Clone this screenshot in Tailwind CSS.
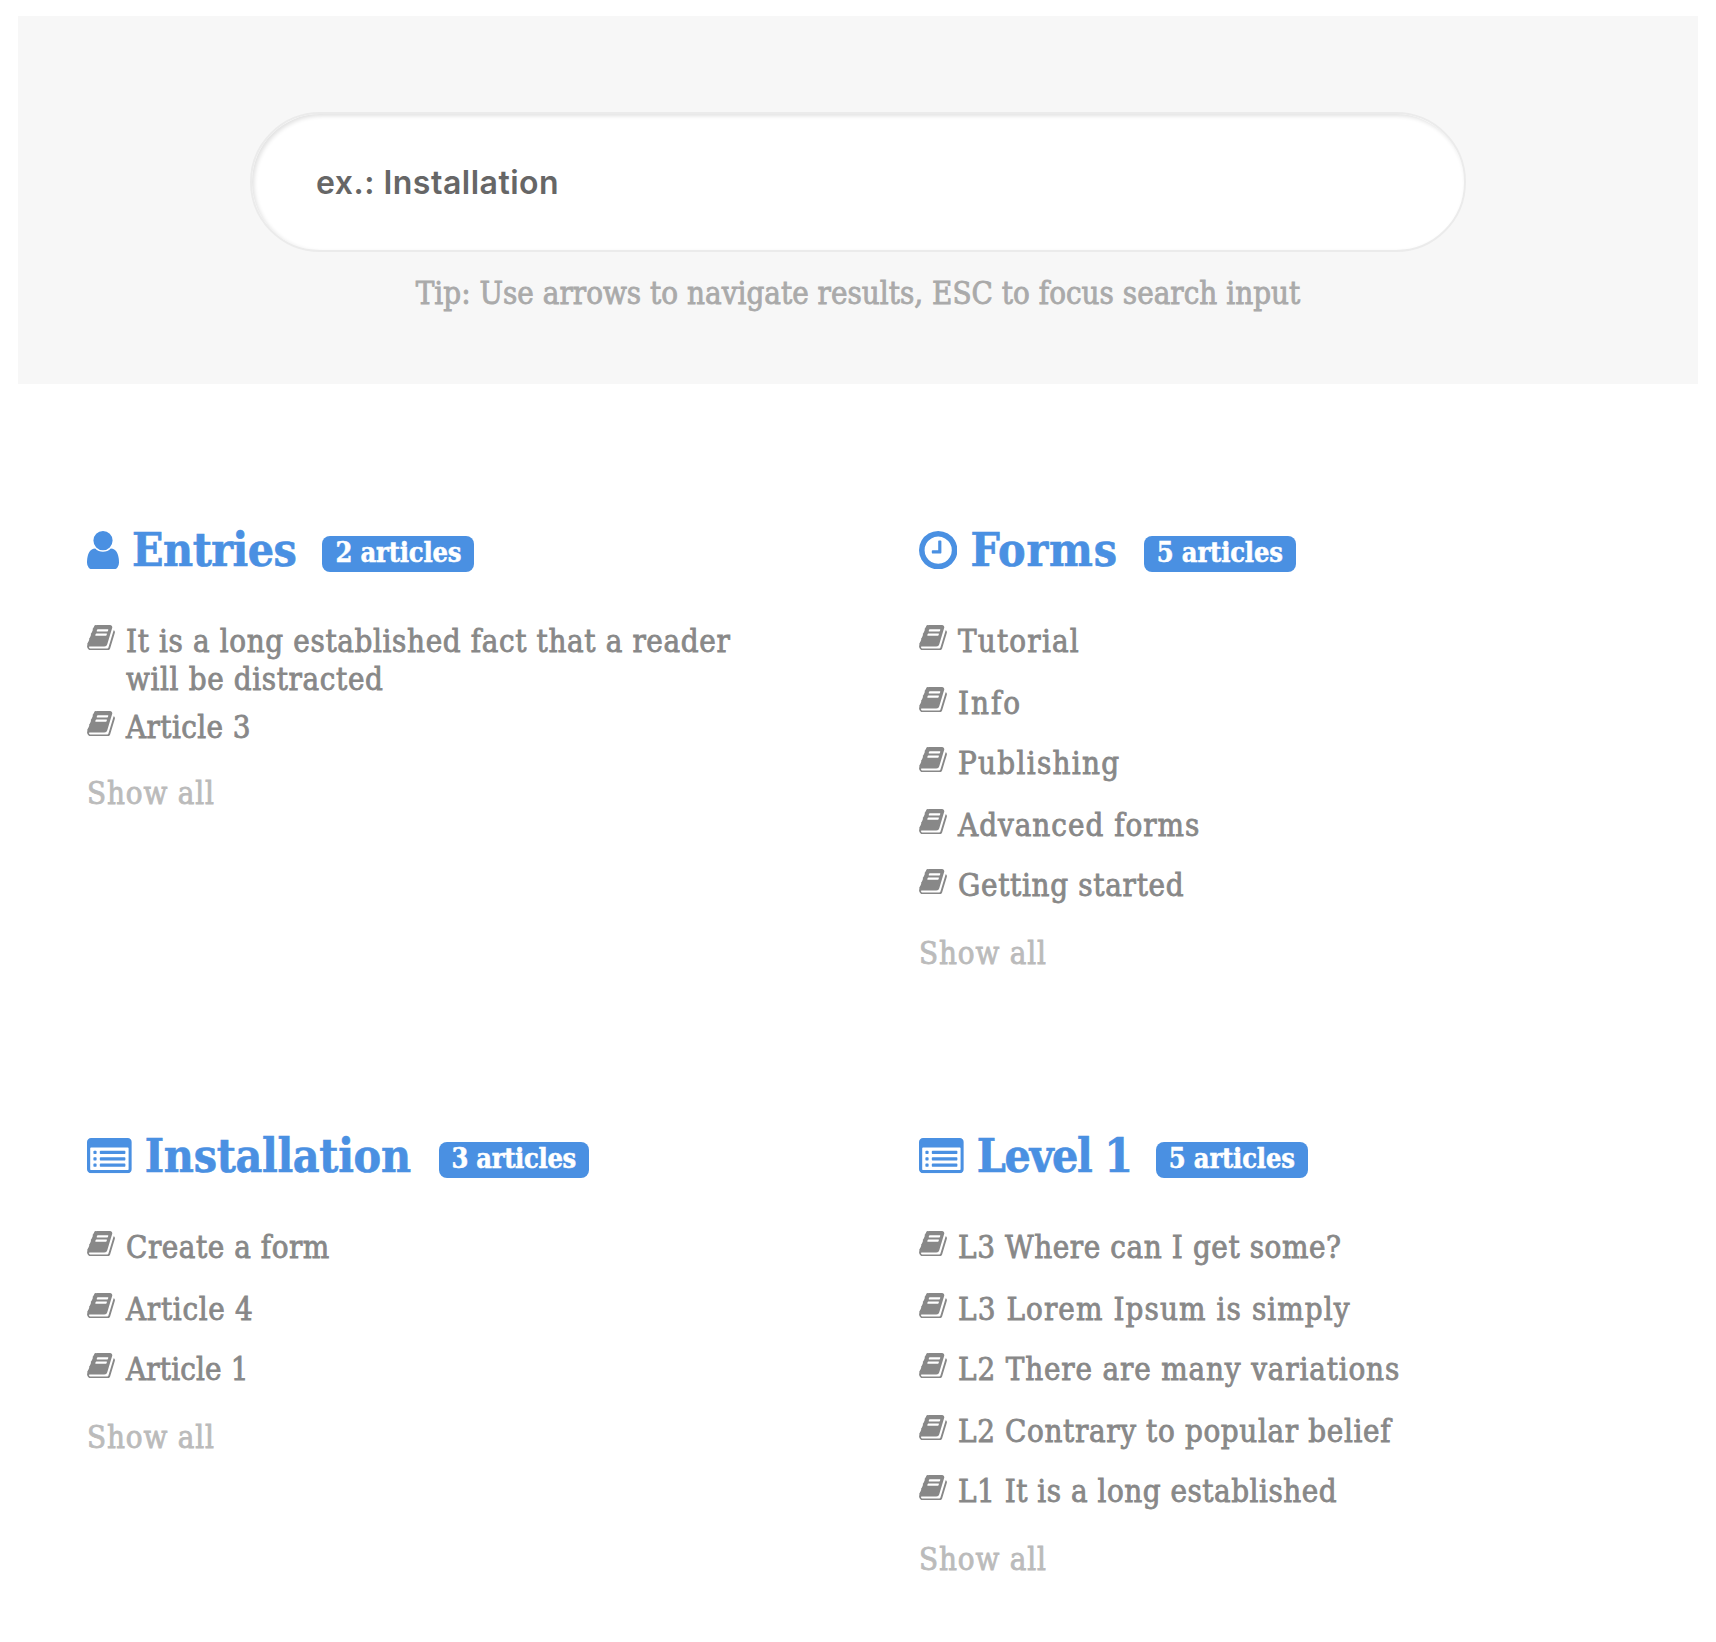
<!DOCTYPE html>
<html lang="en">
<head>
<meta charset="utf-8">
<title>Knowledge base</title>
<script src="https://cdn.jsdelivr.net/npm/@tailwindcss/browser@4"></script>
</head>
<body class="h-[1642px] overflow-hidden bg-white font-['DejaVu_Serif_Condensed','DejaVu_Serif',serif] text-[31px] leading-[38px] text-[#888]">
<svg class="hidden">
  <symbol id="book" viewBox="64 128 1664 1536"><path d="M1703 478q40 57 18 129l-275 906q-19 64-76.500 107.500t-122.500 43.500h-923q-77 0-148.500-53.500t-99.500-131.500q-24-67-2-127 0-4 3-27t4-37q1-8-3-21.500t-3-19.500q2-11 8-21t16.500-23.500 16.500-23.500q23-38 45-91.500t30-91.500q3-10 .5-30t-.5-28q3-11 17-28t17-23q21-36 42-92t25-90q1-9-2.500-32t.5-28q4-13 22-30.500t22-22.500q19-26 42.500-84.500t27.500-96.500q1-8-3-25.500t-2-26.500q2-8 9-18t18-23 17-21q8-12 16.500-30.500t15-35 16-36 19.500-32 26.500-23.500 36-11.500 47.500 5.500l-1 3q38-9 51-9h761q74 0 114 56t18 130l-274 906q-36 119-71.500 153.500t-128.500 34.500h-869q-27 0-38 15-11 16-1 43 24 70 144 70h923q29 0 56-15.500t35-41.500l300-987q7-22 5-57 38 15 59 43zm-1064 2q-4 13 2 22.500t20 9.500h608q13 0 25.500-9.500t16.500-22.500l21-64q4-13-2-22.500t-20-9.500h-608q-13 0-25.500 9.500t-16.500 22.500zm-83 256q-4 13 2 22.500t20 9.500h608q13 0 25.500-9.500t16.500-22.500l21-64q4-13-2-22.500t-20-9.500h-608q-13 0-25.500 9.500t-16.500 22.500z"/></symbol>
  <symbol id="user" viewBox="256 128 1280 1536"><path d="M1536 1399q0 109-62.500 187t-150.500 78h-854q-88 0-150.500-78t-62.500-187q0-85 8.500-160.500t31.500-152 58.500-131 94-89 134.500-34.500q131 128 313 128t313-128q76 0 134.500 34.500t94 89 58.500 131 31.500 152 8.500 160.500zm-256-887q0 159-112.500 271.500t-271.500 112.500-271.500-112.500-112.500-271.500 112.500-271.500 271.500-112.500 271.500 112.500 112.500 271.500z"/></symbol>
  <symbol id="clock" viewBox="128 128 1536 1536"><path d="M1024 544v448q0 14-9 23t-23 9h-320q-14 0-23-9t-9-23v-64q0-14 9-23t23-9h224v-352q0-14 9-23t23-9h64q14 0 23 9t9 23zm416 352q0-148-73-273t-198-198-273-73-273 73-198 198-73 273 73 273 198 198 273 73 273-73 198-198 73-273zm224 0q0 209-103 385.500t-279.500 279.500-385.500 103-385.500-103-279.500-279.500-103-385.500 103-385.500 279.500-279.500 385.500-103 385.500 103 279.500 279.500 103 385.500z"/></symbol>
  <symbol id="list" viewBox="0 128 1792 1408"><path d="M384 1184v64q0 13-9.500 22.500t-22.500 9.500h-64q-13 0-22.500-9.500t-9.500-22.500v-64q0-13 9.500-22.500t22.500-9.500h64q13 0 22.500 9.500t9.500 22.500zm0-256v64q0 13-9.500 22.500t-22.500 9.500h-64q-13 0-22.500-9.500t-9.500-22.500v-64q0-13 9.500-22.500t22.500-9.500h64q13 0 22.500 9.500t9.500 22.500zm0-256v64q0 13-9.500 22.500t-22.500 9.500h-64q-13 0-22.500-9.500t-9.500-22.500v-64q0-13 9.500-22.500t22.500-9.500h64q13 0 22.500 9.500t9.500 22.500zm1152 512v64q0 13-9.500 22.500t-22.500 9.500h-960q-13 0-22.500-9.500t-9.500-22.500v-64q0-13 9.500-22.500t22.500-9.500h960q13 0 22.500 9.500t9.500 22.500zm0-256v64q0 13-9.500 22.500t-22.500 9.500h-960q-13 0-22.500-9.500t-9.500-22.500v-64q0-13 9.500-22.500t22.500-9.500h960q13 0 22.500 9.500t9.500 22.500zm0-256v64q0 13-9.500 22.500t-22.500 9.500h-960q-13 0-22.500-9.500t-9.500-22.500v-64q0-13 9.500-22.500t22.500-9.500h960q13 0 22.500 9.500t9.500 22.500zm128 704v-832q0-13-9.500-22.500t-22.500-9.500h-1472q-13 0-22.500 9.500t-9.500 22.500v832q0 13 9.500 22.500t22.500 9.500h1472q13 0 22.500-9.500t9.500-22.500zm128-1088v1088q0 66-47 113t-113 47h-1472q-66 0-113-47t-47-113v-1088q0-66 47-113t113-47h1472q66 0 113 47t47 113z"/></symbol>
</svg>

<header class="mx-[18px] mt-4 flex h-[368px] flex-col items-center bg-[#f7f7f7] pt-24">
  <input type="text" placeholder="ex.: Installation" class="h-[140px] w-[1216px] rounded-[70px] border-2 border-[#ebebeb] bg-white px-16 font-[Inter,sans-serif] text-[32px] font-semibold tracking-[0.5px] text-[#666] shadow-[inset_2px_2px_4px_rgba(0,0,0,0.12)] placeholder:text-[#666]">
  <p class="mt-[22px] tracking-[0.03px] whitespace-nowrap text-[#aaa] [-webkit-text-stroke:0.8px_#aaa]">Tip: Use arrows to navigate results, ESC to focus search input</p>
</header>

<main class="mt-[136px] grid grid-cols-[832px_700px] grid-rows-[606px_500px] pl-[87px]">
  <section>
    <h2 class="flex h-[60px] items-center text-[46px] leading-[60px] font-bold text-[#4a90e2]">
      <svg class="mr-[13px] h-[38.400px] w-8 fill-current"><use href="#user"/></svg>
      <span class="tracking-[-0.5px] [-webkit-text-stroke:0.6px_#4a90e2]">Entries</span>
      <span class="mt-2 ml-[26px] h-9 w-[152px] rounded-lg bg-[#4a90e2] text-center text-[27px] leading-[34px] tracking-[-0.15px] text-white [-webkit-text-stroke:0.5px_#fff]">2 articles</span>
    </h2>
    <ul class="mt-[42px] [-webkit-text-stroke:0.8px_#888]">
      <li class="mb-2.5 flex w-[660px] gap-[11px]"><svg class="mt-[2.500px] h-[25.700px] w-7 shrink-0 fill-current stroke-none"><use href="#book"/></svg><a class="tracking-[0.64px]">It is a long established fact that a reader<br>will be distracted</a></li>
      <li class="flex gap-[11px]"><svg class="mt-[2.500px] h-[25.700px] w-7 shrink-0 fill-current"><use href="#book"/></svg><a class="tracking-[0.4px]">Article 3</a></li>
    </ul>
    <a class="mt-7 block tracking-[0.85px] text-[#bbb] [-webkit-text-stroke:0.8px_#bbb]">Show all</a>
  </section>

  <section>
    <h2 class="flex h-[60px] items-center text-[46px] leading-[60px] font-bold text-[#4a90e2]">
      <svg class="mr-[13px] size-[38.400px] fill-current"><use href="#clock"/></svg>
      <span class="tracking-[0.8px] [-webkit-text-stroke:0.6px_#4a90e2]">Forms</span>
      <span class="mt-2 ml-[26px] h-9 w-[152px] rounded-lg bg-[#4a90e2] text-center text-[27px] leading-[34px] tracking-[-0.15px] text-white [-webkit-text-stroke:0.5px_#fff]">5 articles</span>
    </h2>
    <ul class="mt-[42px] [-webkit-text-stroke:0.8px_#888]">
      <li class="mb-6 flex gap-[11px]"><svg class="mt-[2.500px] h-[25.700px] w-7 shrink-0 fill-current"><use href="#book"/></svg><a class="tracking-[1.2px]">Tutorial</a></li>
      <li class="mb-[22px] flex gap-[11px]"><svg class="mt-[2.500px] h-[25.700px] w-7 shrink-0 fill-current"><use href="#book"/></svg><a class="tracking-[2px]">Info</a></li>
      <li class="mb-6 flex gap-[11px]"><svg class="mt-[2.500px] h-[25.700px] w-7 shrink-0 fill-current"><use href="#book"/></svg><a class="tracking-[1.3px]">Publishing</a></li>
      <li class="mb-[22px] flex gap-[11px]"><svg class="mt-[2.500px] h-[25.700px] w-7 shrink-0 fill-current"><use href="#book"/></svg><a class="tracking-[1.0px]">Advanced forms</a></li>
      <li class="flex gap-[11px]"><svg class="mt-[2.500px] h-[25.700px] w-7 shrink-0 fill-current"><use href="#book"/></svg><a class="tracking-[0.7px]">Getting started</a></li>
    </ul>
    <a class="mt-[30px] block tracking-[0.85px] text-[#bbb] [-webkit-text-stroke:0.8px_#bbb]">Show all</a>
  </section>

  <section>
    <h2 class="flex h-[60px] items-center text-[46px] leading-[60px] font-bold text-[#4a90e2]">
      <svg class="mr-[13px] h-[35.200px] w-[44.800px] fill-current"><use href="#list"/></svg>
      <span class="tracking-[-0.3px] [-webkit-text-stroke:0.6px_#4a90e2]">Installation</span>
      <span class="mt-2 ml-7 h-9 w-[150px] rounded-lg bg-[#4a90e2] text-center text-[27px] leading-[34px] tracking-[-0.3px] text-white [-webkit-text-stroke:0.5px_#fff]">3 articles</span>
    </h2>
    <ul class="mt-[42px] [-webkit-text-stroke:0.8px_#888]">
      <li class="mb-6 flex gap-[11px]"><svg class="mt-[2.500px] h-[25.700px] w-7 shrink-0 fill-current"><use href="#book"/></svg><a class="tracking-[0.55px]">Create a form</a></li>
      <li class="mb-[22px] flex gap-[11px]"><svg class="mt-[2.500px] h-[25.700px] w-7 shrink-0 fill-current"><use href="#book"/></svg><a class="tracking-[0.7px]">Article 4</a></li>
      <li class="flex gap-[11px]"><svg class="mt-[2.500px] h-[25.700px] w-7 shrink-0 fill-current"><use href="#book"/></svg><a class="tracking-[0.15px]">Article 1</a></li>
    </ul>
    <a class="mt-[30px] block tracking-[0.85px] text-[#bbb] [-webkit-text-stroke:0.8px_#bbb]">Show all</a>
  </section>

  <section>
    <h2 class="flex h-[60px] items-center text-[46px] leading-[60px] font-bold text-[#4a90e2]">
      <svg class="mr-[13px] h-[35.200px] w-[44.800px] fill-current"><use href="#list"/></svg>
      <span class="tracking-[-1.4px] [-webkit-text-stroke:0.6px_#4a90e2]">Level 1</span>
      <span class="mt-2 ml-6 h-9 w-[152px] rounded-lg bg-[#4a90e2] text-center text-[27px] leading-[34px] tracking-[-0.15px] text-white [-webkit-text-stroke:0.5px_#fff]">5 articles</span>
    </h2>
    <ul class="mt-[42px] [-webkit-text-stroke:0.8px_#888]">
      <li class="mb-6 flex gap-[11px]"><svg class="mt-[2.500px] h-[25.700px] w-7 shrink-0 fill-current"><use href="#book"/></svg><a class="tracking-[0.6px]">L3 Where can I get some?</a></li>
      <li class="mb-[22px] flex gap-[11px]"><svg class="mt-[2.500px] h-[25.700px] w-7 shrink-0 fill-current"><use href="#book"/></svg><a class="tracking-[1.1px]">L3 Lorem Ipsum is simply</a></li>
      <li class="mb-6 flex gap-[11px]"><svg class="mt-[2.500px] h-[25.700px] w-7 shrink-0 fill-current"><use href="#book"/></svg><a class="tracking-[0.85px]">L2 There are many variations</a></li>
      <li class="mb-[22px] flex gap-[11px]"><svg class="mt-[2.500px] h-[25.700px] w-7 shrink-0 fill-current"><use href="#book"/></svg><a class="tracking-[0.65px]">L2 Contrary to popular belief</a></li>
      <li class="flex gap-[11px]"><svg class="mt-[2.500px] h-[25.700px] w-7 shrink-0 fill-current"><use href="#book"/></svg><a class="tracking-[0.52px]">L1 It is a long established</a></li>
    </ul>
    <a class="mt-[30px] block tracking-[0.85px] text-[#bbb] [-webkit-text-stroke:0.8px_#bbb]">Show all</a>
  </section>
</main>
</body>
</html>
